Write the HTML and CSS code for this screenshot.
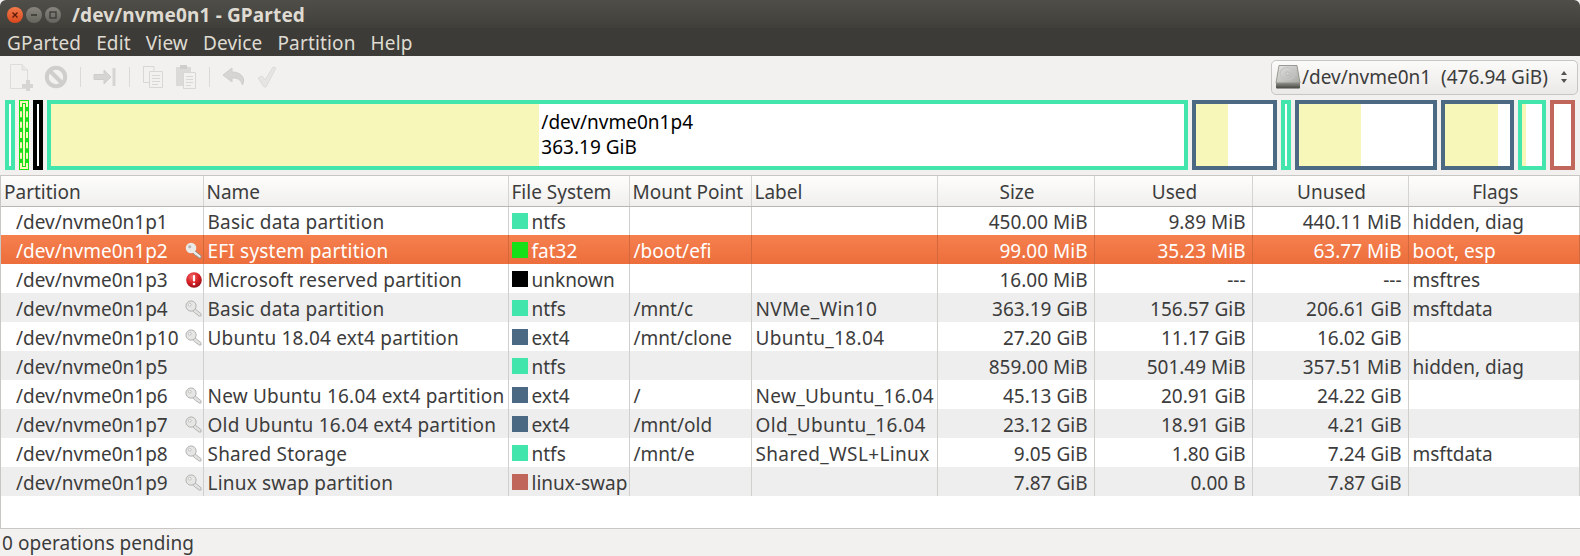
FILE: index.html
```html
<!DOCTYPE html>
<html lang="en">
<head>
    <meta charset="UTF-8">
    <title>/dev/nvme0n1 - GParted</title>
    <link rel="stylesheet" href="styles.css">
</head>
<body>

<svg class="defs" width="0" height="0">
    <defs>
        <radialGradient id="redBall" cx="40%" cy="30%" r="75%">
            <stop offset="0" stop-color="#f26a6a"/>
            <stop offset="0.55" stop-color="#d81f26"/>
            <stop offset="1" stop-color="#8e1116"/>
        </radialGradient>
        <linearGradient id="diskTop" x1="0" y1="0" x2="1" y2="1">
            <stop offset="0" stop-color="#e6e6e4"/>
            <stop offset="1" stop-color="#a8a8a5"/>
        </linearGradient>
        <linearGradient id="diskFront" x1="0" y1="0" x2="0" y2="1">
            <stop offset="0" stop-color="#8d8d88"/>
            <stop offset="1" stop-color="#45453f"/>
        </linearGradient>
        <symbol id="key" viewBox="0 0 18 18">
            <path d="M9.5 8.5 L17 14.5 L17 17 L14.6 17 L13.6 15.6 L12.6 15.6 L12 14.4 L11 14.2 L7.8 11.2 Z" fill="#e2e2e0" stroke="#aeaeac" stroke-width="0.9" stroke-linejoin="round"/>
            <circle cx="6.4" cy="6.4" r="5.4" fill="#e6e6e4" stroke="#aeaeac" stroke-width="1"/>
            <circle cx="5" cy="5" r="1.5" fill="#f6f6f6" stroke="#b5b5b3" stroke-width="0.8"/>
        </symbol>
        <symbol id="keyOn" viewBox="0 0 18 18">
            <path d="M9.5 8.5 L17 14.5 L17 17 L14.6 17 L13.6 15.6 L12.6 15.6 L12 14.4 L11 14.2 L7.8 11.2 Z" fill="#e9e9e7" stroke="#8b857f" stroke-width="0.9" stroke-linejoin="round"/>
            <circle cx="6.4" cy="6.4" r="5.6" fill="#e9e9e7"/>
            <circle cx="5" cy="5" r="1.6" fill="#b5b3b0"/>
        </symbol>
    </defs>
</svg>

<div class="titlebar">
    <div class="winbtns">
        <span class="winbtn close">
            <svg width="8" height="8" viewBox="0 0 8 8"><path d="M1.5 1.5 L6.5 6.5 M6.5 1.5 L1.5 6.5" stroke="#5a1a08" stroke-width="1.3"/></svg>
        </span>
        <span class="winbtn">
            <svg width="8" height="8" viewBox="0 0 8 8"><path d="M1 4 H7" stroke="#35342f" stroke-width="1.5"/></svg>
        </span>
        <span class="winbtn">
            <svg width="8" height="8" viewBox="0 0 8 8"><rect x="1" y="1" width="6" height="6" fill="none" stroke="#35342f" stroke-width="1.2"/></svg>
        </span>
    </div>
    <div class="title">/dev/nvme0n1 - GParted</div>
</div>

<div class="menubar">
    <span class="menu">GParted</span>
    <span class="menu">Edit</span>
    <span class="menu">View</span>
    <span class="menu">Device</span>
    <span class="menu">Partition</span>
    <span class="menu">Help</span>
</div>

<div class="toolbar">
    <svg class="tool" width="24" height="28" viewBox="0 0 24 28">
        <path d="M1.5 1.5 H13 L18.5 7 V25.5 H1.5 Z" fill="#f2f1f0" stroke="#dddcda"/>
        <path d="M13 1.5 V7 H18.5" fill="#e9e8e6" stroke="#dddcda"/>
        <path d="M13 21 H17 V17 H21 V21 H24 V25 H21 V28 H17 V25 H13 Z" fill="#d6d5d3"/>
    </svg>
    <svg class="tool" width="24" height="24" viewBox="0 0 24 24">
        <circle cx="12" cy="12" r="9.2" fill="none" stroke="#cfcecc" stroke-width="4"/>
        <path d="M5.5 5.5 L18.5 18.5" stroke="#cfcecc" stroke-width="4"/>
    </svg>
    <span class="sep"></span>
    <svg class="tool" width="24" height="20" viewBox="0 0 24 20">
        <path d="M1 7.5 H11 V3 L18 10 L11 17 V12.5 H1 Z" fill="#d6d5d3" stroke="#cfcecc"/>
        <rect x="19.5" y="1" width="3" height="18" fill="#d6d5d3"/>
    </svg>
    <span class="sep"></span>
    <svg class="tool" width="22" height="24" viewBox="0 0 22 24">
        <path d="M1.5 1.5 H12 V17.5 H1.5 Z" fill="#f2f1f0" stroke="#d8d7d5"/>
        <path d="M7.5 6.5 H20.5 V22.5 H7.5 Z" fill="#f2f1f0" stroke="#d8d7d5"/>
        <path d="M10 10.5 H18 M10 13.5 H18 M10 16.5 H18 M10 19.5 H16" stroke="#d8d7d5"/>
    </svg>
    <svg class="tool paste" width="22" height="26" viewBox="0 0 22 26">
        <rect x="1" y="3" width="15" height="19" fill="#dbdad8"/>
        <rect x="5" y="1" width="7" height="4" fill="#cfcecc"/>
        <path d="M8.5 8.5 H20.5 V24.5 H8.5 Z" fill="#f2f1f0" stroke="#d8d7d5"/>
        <path d="M11 12.5 H18 M11 15.5 H18 M11 18.5 H18 M11 21.5 H16" stroke="#d8d7d5"/>
    </svg>
    <span class="sep"></span>
    <svg class="tool" width="24" height="20" viewBox="0 0 24 20">
        <path d="M10 1 L1 8 L10 15 V11 C16 10.5 19 13 20.5 18 C24 11 19 5 10 5 Z" fill="#d6d5d3" stroke="#cfcecc"/>
    </svg>
    <svg class="tool" width="20" height="22" viewBox="0 0 20 22">
        <path d="M1 12 L5 10 L8 14 L16 1 L19 2 L9 21 L7 21 Z" fill="#e6e5e3" stroke="#dddcda"/>
    </svg>
    <div class="device">
        <svg class="disk" width="26" height="26" viewBox="0 0 26 26">
            <path d="M4 1.5 H22 L25 19 H1 Z" fill="url(#diskTop)" stroke="#85857f" stroke-width="0.8"/>
            <ellipse cx="12.5" cy="9.5" rx="7.5" ry="6" fill="none" stroke="#c4c4c1" stroke-width="1.2"/>
            <ellipse cx="12.5" cy="9.5" rx="2" ry="1.5" fill="#d6d6d3" stroke="#a9a9a6" stroke-width="0.6"/>
            <path d="M1 19 H25 V23.5 Q25 24.5 24 24.5 H2 Q1 24.5 1 23.5 Z" fill="url(#diskFront)"/>
        </svg>
        <span class="device-name">/dev/nvme0n1&nbsp; (476.94 GiB)</span>
        <svg class="updown" width="8" height="14" viewBox="0 0 8 14">
            <path d="M4 1 L7 5 H1 Z M4 13 L7 9 H1 Z" fill="#55534f"/>
        </svg>
    </div>
</div>

<div class="map">
    <div class="part ntfs" style="width:10px"></div>
    <div class="part fat32 picked" style="width:10px"><div class="used" style="width:40%"></div></div>
    <div class="part unknown" style="width:10px"></div>
    <div class="part ntfs big" style="width:1141px">
        <div class="used" style="width:43.1%"></div>
        <div class="part-text">/dev/nvme0n1p4<br>363.19 GiB</div>
    </div>
    <div class="part ext4" style="width:85px"><div class="used" style="width:41%"></div></div>
    <div class="part ntfs" style="width:10px"></div>
    <div class="part ext4" style="width:142px"><div class="used" style="width:46.5%"></div></div>
    <div class="part ext4" style="width:73px"><div class="used" style="width:82%"></div></div>
    <div class="part ntfs" style="width:28px"><div class="used" style="width:20%"></div></div>
    <div class="part swap" style="width:25px"></div>
</div>

<div class="tree">
    <table>
        <colgroup>
            <col class="c-part"><col class="c-name"><col class="c-fs"><col class="c-mount"><col class="c-label">
            <col class="c-size"><col class="c-used"><col class="c-unused"><col>
        </colgroup>
        <thead>
            <tr>
                <th>Partition</th><th>Name</th><th>File System</th><th>Mount Point</th><th>Label</th>
                <th class="mid">Size</th><th class="mid">Used</th><th class="mid">Unused</th><th class="mid">Flags</th>
            </tr>
        </thead>
        <tbody>
            <tr>
                <td><div class="dev">/dev/nvme0n1p1</div></td><td class="name">Basic data partition</td>
                <td><div class="fs"><i class="swatch c-ntfs"></i>ntfs</div></td><td></td><td class="label"></td>
                <td class="num">450.00 MiB</td><td class="num">9.89 MiB</td><td class="num">440.11 MiB</td><td>hidden, diag</td>
            </tr>
            <tr class="selected">
                <td><div class="dev">/dev/nvme0n1p2<svg class="ico" width="17" height="17"><use href="#keyOn"/></svg></div></td><td class="name">EFI system partition</td>
                <td><div class="fs"><i class="swatch c-fat32"></i>fat32</div></td><td>/boot/efi</td><td class="label"></td>
                <td class="num">99.00 MiB</td><td class="num">35.23 MiB</td><td class="num">63.77 MiB</td><td>boot, esp</td>
            </tr>
            <tr>
                <td><div class="dev">/dev/nvme0n1p3<svg class="ico" width="16" height="16" viewBox="0 0 16 16"><circle cx="8" cy="8" r="7.8" fill="url(#redBall)"/><rect x="6.9" y="3" width="2.2" height="6.6" rx="1" fill="#fff"/><circle cx="8" cy="12" r="1.3" fill="#fff"/></svg></div></td><td class="name">Microsoft reserved partition</td>
                <td><div class="fs"><i class="swatch c-unknown"></i>unknown</div></td><td></td><td class="label"></td>
                <td class="num">16.00 MiB</td><td class="num">---</td><td class="num">---</td><td>msftres</td>
            </tr>
            <tr>
                <td><div class="dev">/dev/nvme0n1p4<svg class="ico" width="17" height="17"><use href="#key"/></svg></div></td><td class="name">Basic data partition</td>
                <td><div class="fs"><i class="swatch c-ntfs"></i>ntfs</div></td><td>/mnt/c</td><td class="label">NVMe_Win10</td>
                <td class="num">363.19 GiB</td><td class="num">156.57 GiB</td><td class="num">206.61 GiB</td><td>msftdata</td>
            </tr>
            <tr>
                <td><div class="dev">/dev/nvme0n1p10<svg class="ico" width="17" height="17"><use href="#key"/></svg></div></td><td class="name">Ubuntu 18.04 ext4 partition</td>
                <td><div class="fs"><i class="swatch c-ext4"></i>ext4</div></td><td>/mnt/clone</td><td class="label">Ubuntu_18.04</td>
                <td class="num">27.20 GiB</td><td class="num">11.17 GiB</td><td class="num">16.02 GiB</td><td></td>
            </tr>
            <tr>
                <td><div class="dev">/dev/nvme0n1p5</div></td><td class="name"></td>
                <td><div class="fs"><i class="swatch c-ntfs"></i>ntfs</div></td><td></td><td class="label"></td>
                <td class="num">859.00 MiB</td><td class="num">501.49 MiB</td><td class="num">357.51 MiB</td><td>hidden, diag</td>
            </tr>
            <tr>
                <td><div class="dev">/dev/nvme0n1p6<svg class="ico" width="17" height="17"><use href="#key"/></svg></div></td><td class="name">New Ubuntu 16.04 ext4 partition</td>
                <td><div class="fs"><i class="swatch c-ext4"></i>ext4</div></td><td>/</td><td class="label">New_Ubuntu_16.04</td>
                <td class="num">45.13 GiB</td><td class="num">20.91 GiB</td><td class="num">24.22 GiB</td><td></td>
            </tr>
            <tr>
                <td><div class="dev">/dev/nvme0n1p7<svg class="ico" width="17" height="17"><use href="#key"/></svg></div></td><td class="name">Old Ubuntu 16.04 ext4 partition</td>
                <td><div class="fs"><i class="swatch c-ext4"></i>ext4</div></td><td>/mnt/old</td><td class="label">Old_Ubuntu_16.04</td>
                <td class="num">23.12 GiB</td><td class="num">18.91 GiB</td><td class="num">4.21 GiB</td><td></td>
            </tr>
            <tr>
                <td><div class="dev">/dev/nvme0n1p8<svg class="ico" width="17" height="17"><use href="#key"/></svg></div></td><td class="name">Shared Storage</td>
                <td><div class="fs"><i class="swatch c-ntfs"></i>ntfs</div></td><td>/mnt/e</td><td class="label">Shared_WSL+Linux</td>
                <td class="num">9.05 GiB</td><td class="num">1.80 GiB</td><td class="num">7.24 GiB</td><td>msftdata</td>
            </tr>
            <tr>
                <td><div class="dev">/dev/nvme0n1p9<svg class="ico" width="17" height="17"><use href="#key"/></svg></div></td><td class="name">Linux swap partition</td>
                <td><div class="fs"><i class="swatch c-swap"></i>linux-swap</div></td><td></td><td class="label"></td>
                <td class="num">7.87 GiB</td><td class="num">0.00 B</td><td class="num">7.87 GiB</td><td></td>
            </tr>
        </tbody>
    </table>
</div>

<div class="statusbar">0 operations pending</div>

</body>
</html>
```

FILE: styles.css
```css
html, body {
    margin: 0;
    padding: 0;
}

body {
    width: 1580px;
    height: 556px;
    overflow: hidden;
    display: flex;
    flex-direction: column;
    background-color: #f2f1f0;
    color: #3c3c3c;
    font-family: "Noto Sans", "Open Sans", sans-serif;
    font-size: 19px;
}

.defs {
    position: absolute;
}

/* window title and menu */
.titlebar {
    height: 28px;
    flex: none;
    display: flex;
    align-items: center;
    background: linear-gradient(#4f4e49, #403f3a);
    border-radius: 6px 6px 0 0;
}

.winbtns {
    display: flex;
    gap: 3px;
    margin-left: 7px;
    padding-top: 2px;
}

.winbtn {
    width: 16px;
    height: 16px;
    border-radius: 50%;
    display: flex;
    align-items: center;
    justify-content: center;
    background: linear-gradient(#87857d, #65645d);
}

.winbtn.close {
    background: linear-gradient(#f2794b, #d9481c);
}

.title {
    margin-left: 11px;
    padding-top: 2px;
    color: #dfdbd2;
    font-weight: 700;
    font-size: 19px;
    letter-spacing: 0.15px;
}

.menubar {
    height: 28px;
    box-sizing: border-box;
    flex: none;
    display: flex;
    align-items: center;
    padding: 2px 0 0 7px;
    background: #3c3b37;
    color: #dfdbd2;
    letter-spacing: 0.15px;
}

.menu {
    margin-right: 15px;
}

/* toolbar */
.toolbar {
    height: 42px;
    flex: none;
    display: flex;
    align-items: center;
    padding-left: 9px;
    padding-right: 2px;
}

.tool {
    flex: none;
    margin-right: 11px;
}

.sep {
    flex: none;
    width: 1px;
    height: 20px;
    margin: 0 12px 0 1px;
    background-color: #dbdad8;
}

.device {
    margin-left: auto;
    width: 307px;
    height: 35px;
    box-sizing: border-box;
    display: flex;
    align-items: center;
    padding: 0 9px 0 3px;
    border: 1px solid #c8c6c2;
    border-radius: 5px;
    background: linear-gradient(#fbfbfa, #ebe9e7);
}

.disk {
    flex: none;
}

.device-name {
    flex: 1;
    margin-left: 1px;
}

/* partition map */
.map {
    height: 70px;
    flex: none;
    display: flex;
    gap: 4px;
    margin: 2px 0 5px 5px;
}

.part {
    flex: none;
    box-sizing: border-box;
    display: flex;
    position: relative;
    background-color: #fff;
    border: 4px solid #000;
}

.part.ntfs { border-color: #42e5ac; }
.part.ext4 { border-color: #4b6983; }
.part.swap { border-color: #c1665a; }
.part.unknown { border-color: #000; }
.part.fat32 { border-color: #18e018; }

.part.picked {
    background-color: #f7f7ba;
    outline: 2px dashed #f7f7ba;
    outline-offset: -3px;
}

.used {
    background-color: #f7f7ba;
}

.part-text {
    margin-left: 2px;
    padding-top: 6px;
    color: #000;
    line-height: 25px;
}

/* partition list */
.tree {
    flex: 1;
    min-height: 0;
    overflow: hidden;
    background-color: #fff;
    border-top: 1px solid #c9c7c3;
    border-bottom: 1px solid #c9c7c3;
    border-left: 1px solid #c9c7c3;
}

table {
    width: 1579px;
    table-layout: fixed;
    border-collapse: collapse;
}

.c-part { width: 202px; }
.c-name { width: 305px; }
.c-fs { width: 121px; }
.c-mount { width: 122px; }
.c-label { width: 186px; }
.c-size { width: 157px; }
.c-used { width: 158px; }
.c-unused { width: 156px; }

th {
    height: 30px;
    padding: 2px 0 0 3px;
    box-sizing: border-box;
    overflow: hidden;
    white-space: nowrap;
    text-align: left;
    font-weight: 400;
    background: linear-gradient(#fdfdfc, #f0efee);
    border-right: 1px solid #d6d4d0;
    border-bottom: 1px solid #b8b6b2;
}

th.mid {
    text-align: center;
}

td {
    height: 29px;
    padding: 2px 0 0 4px;
    box-sizing: border-box;
    overflow: hidden;
    white-space: nowrap;
    border-right: 1px solid #d0cfcc;
}

.name {
    letter-spacing: 0.2px;
}

.label {
    letter-spacing: 0.35px;
}

tbody tr:nth-child(even) {
    background-color: #eeeeee;
}

tbody tr.selected {
    background: linear-gradient(#f5804e, #ec6e3c);
    color: #fff;
}

tr.selected td {
    border-right-color: #d3683c;
}

.num {
    text-align: right;
    padding-right: 6px;
}

.dev {
    display: flex;
    align-items: center;
    justify-content: space-between;
    padding-left: 11px;
}

.ico {
    flex: none;
    margin-right: 1px;
}

.fs {
    display: flex;
    align-items: center;
    gap: 4px;
    margin-left: -1px;
}

.swatch {
    width: 16px;
    height: 16px;
    flex: none;
    margin-top: -2px;
}

.c-ntfs { background-color: #42e5ac; }
.c-fat32 { background-color: #18e018; }
.c-unknown { background-color: #000; }
.c-ext4 { background-color: #4b6983; }
.c-swap { background-color: #c1665a; }

.statusbar {
    height: 27px;
    flex: none;
    padding-left: 2px;
    line-height: 28px;
    letter-spacing: 0.05px;
}
```
